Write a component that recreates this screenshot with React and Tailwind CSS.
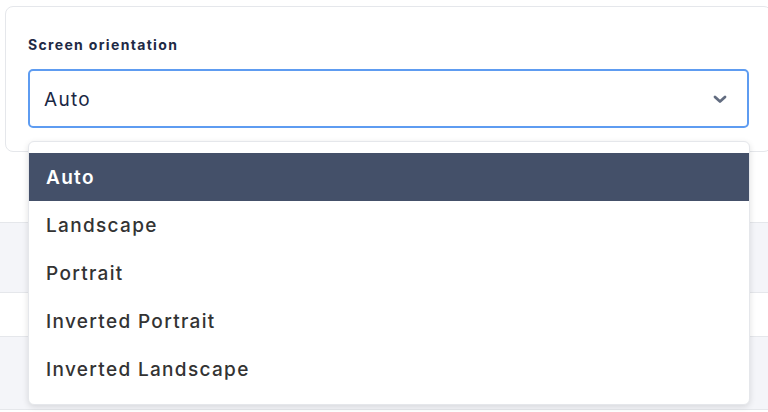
const OPTIONS = ["Auto", "Landscape", "Portrait", "Inverted Portrait", "Inverted Landscape"];

export default function App() {
  const selected = "Auto";

  return (
    <div className="relative w-[768px] h-[412px] overflow-hidden bg-white font-['Inter',sans-serif]">
      {/* settings card */}
      <div className="ml-[5px] mt-[6px] w-[767px] rounded-lg border border-gray-200 bg-white pl-[22px] pt-[28px] pb-[23px]">
        <div className="h-[20px] text-[14px] leading-[20px] font-bold tracking-[0.095em] text-[#1e2a45]">Screen orientation</div>
        <div className="mt-[14px] flex h-[59px] w-[721px] items-center justify-between rounded-[5px] border-2 border-[#5e9cf1] pl-[14px] pr-[20px]">
          <span className="pt-[3px] text-[19px] tracking-[0.07em] text-[#1a2744]">{selected}</span>
          <svg width="14" height="10" viewBox="0 0 14 10" fill="none">
            <polyline points="2,3 7,7.5 12,3" stroke="#626c80" strokeWidth="2.8" strokeLinecap="round" strokeLinejoin="round" />
          </svg>
        </div>
      </div>

      {/* rows behind the menu */}
      <div className="h-[71px] border-b border-gray-200 bg-white" />
      <div className="h-[70px] border-b border-gray-200 bg-[#f4f5f9]" />
      <div className="h-[44px] border-b border-gray-200 bg-white" />
      <div className="h-[73px] border-b border-gray-200 bg-[#f4f5f9]" />

      {/* open menu */}
      <div className="absolute left-[28px] top-[141px] w-[722px] h-[264px] rounded-md border border-gray-200 bg-white py-[11px] shadow-[0_2px_6px_rgba(0,0,0,0.12)]">
        {OPTIONS.map((opt) => (
          <div
            key={opt}
            className={`flex h-[48px] items-center px-[17px] pt-[3px] text-[19px] tracking-[0.07em] ${
              opt === selected ? "bg-[#445069] font-semibold text-white" : "font-medium text-[#333333]"
            }`}
          >
            {opt}
          </div>
        ))}
      </div>
    </div>
  );
}
